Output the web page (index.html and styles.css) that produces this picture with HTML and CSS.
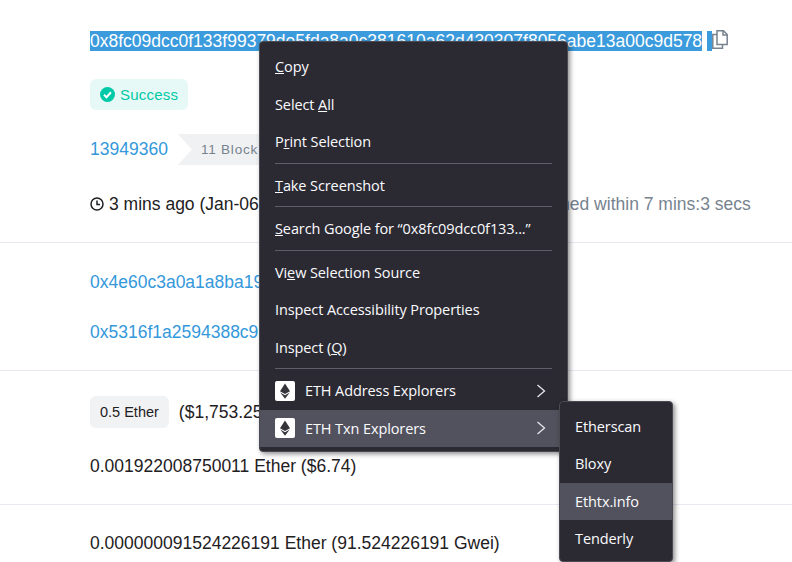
FILE: index.html
```html
<!DOCTYPE html>
<html lang="en">
<head>
    <meta charset="UTF-8">
    <title>Transaction Details</title>
    <link rel="stylesheet" href="styles.css">
</head>
<body>
    <main>
        <section class="group group-status">
            <div class="hash-row">
                <span class="selected">0x8fc09dcc0f133f99379de5fda8a0c381610a62d430307f8056abe13a00c9d578</span>
                <span class="selected-gap"></span>
                <svg class="copy-icon" width="16" height="19" viewBox="0 0 16 19" fill="none" stroke="#77838f" stroke-width="1.5">
                    <path d="M5 14.500V.8h6.500l3.700 3.700v10z"/>
                    <path d="M11 .8v4.200h4"/>
                    <path d="M5 4.500H.8v13.700h9.700v-3.700"/>
                </svg>
            </div>
            <div class="badge-row">
                <span class="badge-success">
                    <svg width="15" height="15" viewBox="0 0 15 15">
                        <circle cx="7.500" cy="7.500" r="7.500" fill="#00c9a7"/>
                        <path d="M4 7.800l2.500 2.400L11 5.300" fill="none" stroke="#fff" stroke-width="2"/>
                    </svg>
                    Success
                </span>
            </div>
            <div class="block-row">
                <a class="link">13949360</a>
                <span class="block-tag">11 Block</span>
            </div>
            <div class="time-row">
                <svg width="14" height="14" viewBox="0 0 14 14" fill="none" stroke="#1e2022" stroke-width="1.500">
                    <circle cx="7" cy="7" r="6"/>
                    <path d="M7 3.500V7.500H10"/>
                </svg>
                <span class="time-text">3 mins ago (Jan-06-2022 03:21:48 PM +UTC)</span>
                <span class="muted">Confirmed within 7 mins:3 secs</span>
            </div>
        </section>

        <section class="group group-address">
            <div><a class="link">0x4e60c3a0a1a8ba19</a></div>
            <div><a class="link">0x5316f1a2594388c9</a></div>
        </section>

        <section class="group group-value">
            <div class="value-row">
                <span class="ether-tag">0.5 Ether</span>
                <span>($1,753.25)</span>
            </div>
            <div>0.001922008750011 Ether ($6.74)</div>
        </section>

        <section class="group group-gas">
            <div>0.000000091524226191 Ether (91.524226191 Gwei)</div>
        </section>
    </main>

    <div class="menu main-menu">
        <div class="item"><span><u>C</u>opy</span></div>
        <div class="item"><span>Select <u>A</u>ll</span></div>
        <div class="item"><span>P<u>r</u>int Selection</span></div>
        <div class="sep"></div>
        <div class="item"><span><u>T</u>ake Screenshot</span></div>
        <div class="sep"></div>
        <div class="item"><span><u>S</u>earch Google for “0x8fc09dcc0f133...”</span></div>
        <div class="sep"></div>
        <div class="item"><span>Vi<u>e</u>w Selection Source</span></div>
        <div class="item"><span>Inspect Accessibility Properties</span></div>
        <div class="item"><span>Inspect (<u>Q</u>)</span></div>
        <div class="sep"></div>
        <div class="item item-icon">
            <svg class="eth" width="20" height="20" viewBox="0 0 20 20">
                <rect width="20" height="20" rx="2" fill="#fff"/>
                <path d="M10 2.500L5 10.200 10 13l5-2.800z" fill="#34343a"/>
                <path d="M10 14.300L5.300 11.500 10 17.800l4.700-6.300z" fill="#34343a"/>
            </svg>
            <span>ETH Address Explorers</span>
            <svg class="chev" width="10" height="14" viewBox="0 0 10 14" fill="none" stroke="#e6e6ea" stroke-width="1.300"><path d="M1.500 1l7 6-7 6"/></svg>
        </div>
        <div class="item item-icon active">
            <svg class="eth" width="20" height="20" viewBox="0 0 20 20">
                <rect width="20" height="20" rx="2" fill="#fff"/>
                <path d="M10 2.500L5 10.200 10 13l5-2.800z" fill="#34343a"/>
                <path d="M10 14.300L5.300 11.500 10 17.800l4.700-6.300z" fill="#34343a"/>
            </svg>
            <span>ETH Txn Explorers</span>
            <svg class="chev" width="10" height="14" viewBox="0 0 10 14" fill="none" stroke="#e6e6ea" stroke-width="1.300"><path d="M1.500 1l7 6-7 6"/></svg>
        </div>
    </div>

    <div class="menu sub-menu">
        <div class="item"><span>Etherscan</span></div>
        <div class="item"><span>Bloxy</span></div>
        <div class="item active"><span>Ethtx.info</span></div>
        <div class="item"><span>Tenderly</span></div>
    </div>
</body>
</html>
```

FILE: styles.css
```css
html, body {
    margin: 0;
    padding: 0;
    height: 562px;
    overflow: hidden;
}
body {
    font-family: "Liberation Sans", Arial, sans-serif;
    font-size: 17.5px;
    color: #1e2022;
    background: #fff;
}
.group {
    padding-left: 90px;
    border-bottom: 1px solid #e7eaf3;
    white-space: nowrap;
}
.group-status {
    height: 243px;
    padding-top: 30px;
    box-sizing: border-box;
}
.hash-row {
    display: flex;
    align-items: center;
    height: 22px;
}
.selected {
    background: #3b9bdc;
    color: #fff;
    line-height: 20px;
}
.selected-gap {
    width: 5px;
    height: 20px;
    margin-left: 5px;
    background: #3b9bdc;
}
.copy-icon {
    margin-top: -3px;
}
.badge-row {
    margin-top: 27px;
    height: 31px;
}
.badge-success {
    display: inline-flex;
    align-items: center;
    gap: 5px;
    height: 31px;
    padding: 0 10px;
    box-sizing: border-box;
    border-radius: 6px;
    background: #e6f9f6;
    color: #00c9a7;
    font-size: 15px;
    letter-spacing: 0.2px;
}
.block-row {
    display: flex;
    align-items: center;
    margin-top: 24px;
    height: 31px;
}
.link {
    color: #3498db;
}
.block-tag {
    margin-left: 10px;
    padding-left: 23px;
    height: 31px;
    line-height: 31px;
    width: 200px;
    background: #f0f1f3;
    color: #77838f;
    font-size: 13.5px;
    letter-spacing: 0.8px;
    clip-path: polygon(0 0, 100% 0, 100% 100%, 0 100%, 14px 50%);
}
.time-row {
    display: flex;
    align-items: center;
    margin-top: 28px;
    height: 22px;
}
.time-text {
    margin-left: 5px;
}
.muted {
    margin-left: 44px;
    color: #77838f;
}
.group-address {
    height: 128px;
    padding-top: 29px;
    box-sizing: border-box;
}
.group-address div {
    height: 22px;
    margin-bottom: 28px;
}
.group-value {
    height: 134px;
    padding-top: 25px;
    box-sizing: border-box;
}
.value-row {
    display: flex;
    align-items: center;
    gap: 10px;
    margin-bottom: 28px;
}
.ether-tag {
    display: inline-block;
    height: 32px;
    line-height: 32px;
    padding: 0 10px;
    border-radius: 6px;
    background: #f1f2f4;
    font-size: 14.5px;
}
.group-gas {
    border-bottom: 0;
    padding-top: 28px;
}

/* context menus */
.menu {
    position: absolute;
    box-sizing: border-box;
    background: #2b2a33;
    border: 1px solid #4a4a52;
    border-radius: 4px;
    color: #fbfbfe;
    font-family: "Open Sans", sans-serif;
    font-size: 14.5px;
    letter-spacing: -0.1px;
    box-shadow: 2px 2px 5px rgba(0, 0, 0, 0.45);
}
.main-menu {
    left: 259px;
    top: 41px;
    width: 309px;
    height: 411px;
    padding-top: 6px;
}
.sub-menu {
    left: 559px;
    top: 401px;
    width: 114px;
    height: 161px;
    padding-top: 5.5px;
}
.item {
    display: flex;
    align-items: center;
    height: 37.5px;
    padding: 0 15px;
}
.item-icon span {
    margin-left: 10px;
}
.eth {
    flex: none;
}
.chev {
    margin-left: auto;
    margin-right: 6px;
}
.active {
    background: #52525e;
}
.sep {
    height: 1px;
    margin: 2px 15px 3px;
    background: #5f5e68;
}
```
